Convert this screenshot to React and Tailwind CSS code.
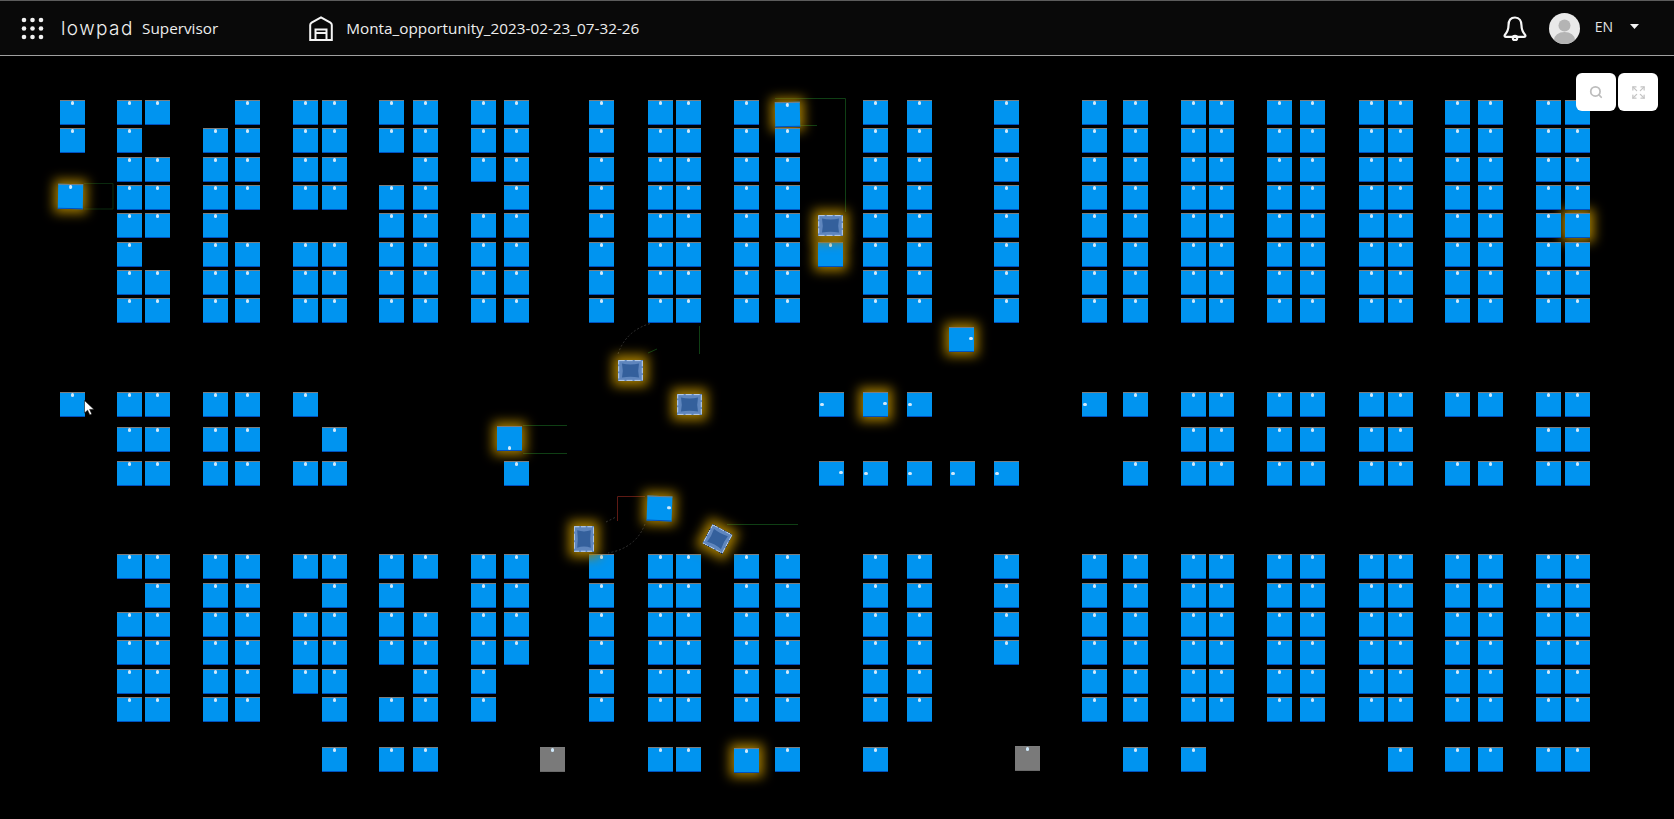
import { Expand, Search } from 'lucide-react';

// x of every storage column in page pixels
const COLS = [60, 117, 145, 203, 235.3, 293.3, 321.7, 379.3, 413, 470.7, 503.7, 589.3, 648, 676, 734.3, 774.7, 863, 906.7, 994.3, 1082, 1122.5, 1181.4, 1209.3, 1267, 1300, 1359, 1387.5, 1445, 1478, 1536.4, 1565];
const TOP_ROWS = [100, 128.3, 156.7, 185, 213.3, 241.7, 270, 298.3];
const BOTTOM_ROWS = [554.3, 583, 611.7, 640, 668.7, 697];
const HEADER_H = 56;

const TOP_MISSING = { 0: [2, 3, 4, 5, 6, 7], 2: [1, 5], 3: [0], 4: [4], 5: [4], 6: [4], 7: [2], 9: [3], 15: [0], 30: [4] };
const BOTTOM_MISSING = { 0: [0, 1, 2, 3, 4, 5], 1: [1], 5: [1, 5], 7: [4], 8: [1], 10: [4, 5], 18: [4, 5] };

const MIDDLE = [
  { y: 392.3, cols: [0, 1, 2, 3, 4, 5, 20, 21, 22, 23, 24, 25, 26, 27, 28, 29, 30] },
  { y: 426.7, cols: [1, 2, 3, 4, 6, 21, 22, 23, 24, 25, 26, 29, 30] },
  { y: 461, cols: [1, 2, 3, 4, 5, 6, 10, 20, 21, 22, 23, 24, 25, 26, 27, 28, 29, 30] },
];
const LAST_ROW = [6, 7, 8, 12, 13, 15, 16, 20, 21, 26, 27, 28, 29, 30];

const buildTiles = () => {
  // active ones go first so the neighbours sit on top of their glow
  const tiles = [
    { x: 58.3, y: 184, glow: true, rot: 1 },
    { x: 775, y: 102, glow: true, rot: -1 },
    { x: 818, y: 242, glow: true },
    { x: 1565, y: 213.3, glow: true },
    { x: 949, y: 327, glow: true, side: 'right' },
    { x: 863.3, y: 392.3, glow: true, side: 'right' },
    { x: 497, y: 426, glow: true, side: 'bottom' },
    { x: 646.7, y: 496, glow: true, side: 'right', rot: 2 },
    { x: 734, y: 748, glow: true },
  ];

  COLS.forEach((x, c) => {
    TOP_ROWS.forEach((y, r) => {
      if (!(TOP_MISSING[c] || []).includes(r)) tiles.push({ x, y });
    });
    BOTTOM_ROWS.forEach((y, r) => {
      if (!(BOTTOM_MISSING[c] || []).includes(r)) tiles.push({ x, y });
    });
  });
  MIDDLE.forEach((row) => row.cols.forEach((c) => tiles.push({ x: COLS[c], y: row.y })));
  LAST_ROW.forEach((c) => tiles.push({ x: COLS[c], y: 747.3 }));

  // shuttles standing in the aisles, marker turned sideways
  tiles.push({ x: 1082, y: 392.3, side: 'left' });
  tiles.push({ x: 819.3, y: 392.3, side: 'left' });
  tiles.push({ x: 906.7, y: 392.3, side: 'left' });
  tiles.push({ x: 819.3, y: 461, side: 'right' });
  tiles.push({ x: 863.3, y: 461, side: 'left' });
  tiles.push({ x: 906.7, y: 461, side: 'left' });
  tiles.push({ x: 950.3, y: 461, side: 'left' });
  tiles.push({ x: 994.3, y: 461, side: 'left' });

  // grey = offline
  tiles.push({ x: 540.3, y: 747.3, grey: true });
  tiles.push({ x: 1015, y: 746, grey: true });
  return tiles;
};

const ROBOTS = [
  { x: 618, y: 360, w: 25, h: 21, rot: 0 },
  { x: 676.7, y: 394, w: 25, h: 21, rot: 0 },
  { x: 818.3, y: 215, w: 25, h: 21, rot: 0 },
  { x: 574, y: 526, w: 20, h: 26, rot: 0 },
  { x: 706, y: 528, w: 23, h: 22, rot: 28 },
];

function Tile({ x, y, side = 'top', glow, grey, rot = 0 }) {
  return (
    <div
      className={`absolute w-[25px] h-[25px] border-t border-b border-t-[#7d7d7d] ${grey ? 'bg-[#7a7a7a] border-b-[#6a6a6a]' : 'bg-[#0094f0] border-b-[#0050c0]'} ${glow ? 'shadow-[0_0_12px_4px_#a47c00]' : ''}`}
      style={{ left: x, top: y - HEADER_H, transform: rot ? `rotate(${rot}deg)` : undefined }}
    >
      {side === 'top' && <span className="absolute top-0 left-[11px] w-[3px] h-[4px] rounded-full bg-[#cfe9fb]" />}
      {side === 'bottom' && <span className="absolute bottom-0 left-[11px] w-[3px] h-[4px] rounded-full bg-[#cfe9fb]" />}
      {side === 'left' && <span className="absolute top-[10px] left-[1px] w-[4px] h-[3px] rounded-full bg-[#cfe9fb]" />}
      {side === 'right' && <span className="absolute top-[9px] right-[1px] w-[4px] h-[3px] rounded-full bg-[#cfe9fb]" />}
    </div>
  );
}

function Robot({ x, y, w, h, rot }) {
  return (
    <div
      className="absolute shadow-[0_0_12px_5px_#a47c00]"
      style={{ left: x, top: y - HEADER_H, width: w, height: h, transform: rot ? `rotate(${rot}deg)` : undefined }}
    >
      <svg width={w} height={h} viewBox="0 0 25 24" preserveAspectRatio="none" className="block">
        <rect width="25" height="24" fill="#5f86bd" />
        <path d="M4 4 Q12.5 6 21 4 Q19.5 12 21 20 Q12.5 18 4 20 Q5.5 12 4 4 Z" fill="#34609c" />
        <rect x="0.7" y="0.7" width="23.6" height="22.6" fill="none" stroke="#c2d4ec" strokeWidth="1" strokeDasharray="6 2" />
      </svg>
    </div>
  );
}

function AisleLines() {
  return (
    <svg className="absolute left-0 top-0 pointer-events-none" width="1674" height="763" viewBox={`0 ${HEADER_H} 1674 763`} fill="none">
      <g stroke="#0f3f14" strokeWidth="1">
        <path d="M775 98.5 H845.5 V212" />
        <path d="M775 125.5 H817" />
        <path d="M84 183.5 H113 V209 H84" stroke="#0a2a0e" />
        <path d="M523 425.5 H567" />
        <path d="M523 453.5 H567" />
        <path d="M699.5 326 V354" />
        <path d="M727 524.5 H798" />
        <path d="M648 353 L657 349" />
      </g>
      <path d="M617.5 521 V496.5 H645" stroke="#5e1a14" strokeWidth="1" />
      <path d="M618 354 Q626 330 652 323" stroke="#333" strokeWidth="1" strokeDasharray="2 2" />
      <path d="M645 524 Q636 548 608 553" stroke="#333" strokeWidth="1" strokeDasharray="2 2" />
      <path d="M606 522 L616 517" stroke="#333" strokeWidth="1" strokeDasharray="2 2" />
    </svg>
  );
}

function DotsIcon() {
  const pts = [24, 32.5, 41];
  return (
    <svg width="24" height="24" viewBox="20 16 24 24" className="block">
      {pts.map((cx, i) => [20, 28.5, 37].map((cy, j) => <circle key={`${i}-${j}`} cx={cx} cy={cy} r="2.3" fill="#f2f2f2" />))}
    </svg>
  );
}

function WarehouseIcon() {
  return (
    <svg width="24" height="25" viewBox="0 0 24 25" fill="none" stroke="#f4f4f4" strokeWidth="2" className="block">
      <path d="M1.2 24 V9 Q1.2 7.6 2.6 6.6 L12 1.3 L21.4 6.6 Q22.8 7.6 22.8 9 V24 Z" />
      <path d="M6.5 24 V13.5 H17.5 V24" />
      <path d="M6.5 17 H17.5" />
    </svg>
  );
}

function BellIcon() {
  return (
    <svg width="24" height="25" viewBox="0 0 24 25" fill="none" stroke="#f6f6f6" strokeWidth="2.2" className="block">
      <path d="M12 1.5 C7.5 1.5 5.5 5 5.5 9.5 C5.5 14 4 16.5 1.8 19 C1.2 20 1.8 20.8 3 20.8 H21 C22.2 20.8 22.8 20 22.2 19 C20 16.5 18.5 14 18.5 9.5 C18.5 5 16.5 1.5 12 1.5 Z" />
      <circle cx="12" cy="22" r="2.2" />
    </svg>
  );
}

export default function App() {
  const tiles = buildTiles();

  return (
    <div className="h-screen w-full flex flex-col bg-black overflow-hidden font-['Open_Sans',sans-serif]">

      {/* Top bar */}
      <header className="h-[56px] shrink-0 flex items-center bg-[#090909] border-t border-t-[#5c5c5c] border-b border-b-[#a0a0a0] pl-[20px] pr-[35px]">
        <DotsIcon />
        <span className="ml-[17px] w-[75px] font-['Inter',sans-serif] font-light text-[19px] tracking-[1.4px] leading-none text-[#f0f0f0] whitespace-nowrap">lowpad</span>
        <span className="ml-[6px] text-[15.3px] text-[#eeeeee] whitespace-nowrap">Supervisor</span>
        <div className="ml-[91px]"><WarehouseIcon /></div>
        <span className="ml-[13px] text-[15.3px] text-[#eeeeee] whitespace-nowrap">Monta_opportunity_2023-02-23_07-32-26</span>

        <div className="ml-auto flex items-center">
          <BellIcon />
          <div className="ml-[22px] w-[31px] h-[31px] rounded-full bg-[#e9e9e9] overflow-hidden">
            <svg width="31" height="31" viewBox="0 0 31 31" className="block">
              <circle cx="15.5" cy="12.5" r="6" fill="#b4b4b4" />
              <ellipse cx="15.5" cy="27" rx="10.5" ry="8" fill="#b4b4b4" />
            </svg>
          </div>
          <span className="ml-[15px] mb-[3px] text-[14px] text-[#e4e4e4]">EN</span>
          <svg width="9" height="5" viewBox="0 0 9 5" className="block ml-[17px] mb-[3px]">
            <path d="M0 0 H9 L4.5 5 Z" fill="#f4f4f4" />
          </svg>
        </div>
      </header>

      {/* Warehouse map */}
      <main className="relative flex-1">
        <AisleLines />
        {tiles.map((t, i) => <Tile key={i} {...t} />)}
        {ROBOTS.map((r, i) => <Robot key={i} {...r} />)}

        <div className="absolute top-[17px] right-[16px] flex gap-[2px]">
          <button className="w-[40px] h-[38px] flex items-center justify-center bg-white rounded-md">
            <Search size={14} strokeWidth={3} className="text-[#bdbdbd]" />
          </button>
          <button className="w-[40px] h-[38px] flex items-center justify-center bg-white rounded-md">
            <Expand size={15} strokeWidth={2} className="text-[#c4c4c4]" />
          </button>
        </div>

        {/* mouse pointer in the recording */}
        <svg className="absolute left-[84px] top-[344px]" width="11" height="16" viewBox="0 0 11 16">
          <path d="M0.5 0.5 V13 L3.6 10.2 L5.8 15 L7.8 14 L5.6 9.4 H10 Z" fill="#fff" stroke="#111" strokeWidth="0.6" />
        </svg>
      </main>
    </div>
  );
}
